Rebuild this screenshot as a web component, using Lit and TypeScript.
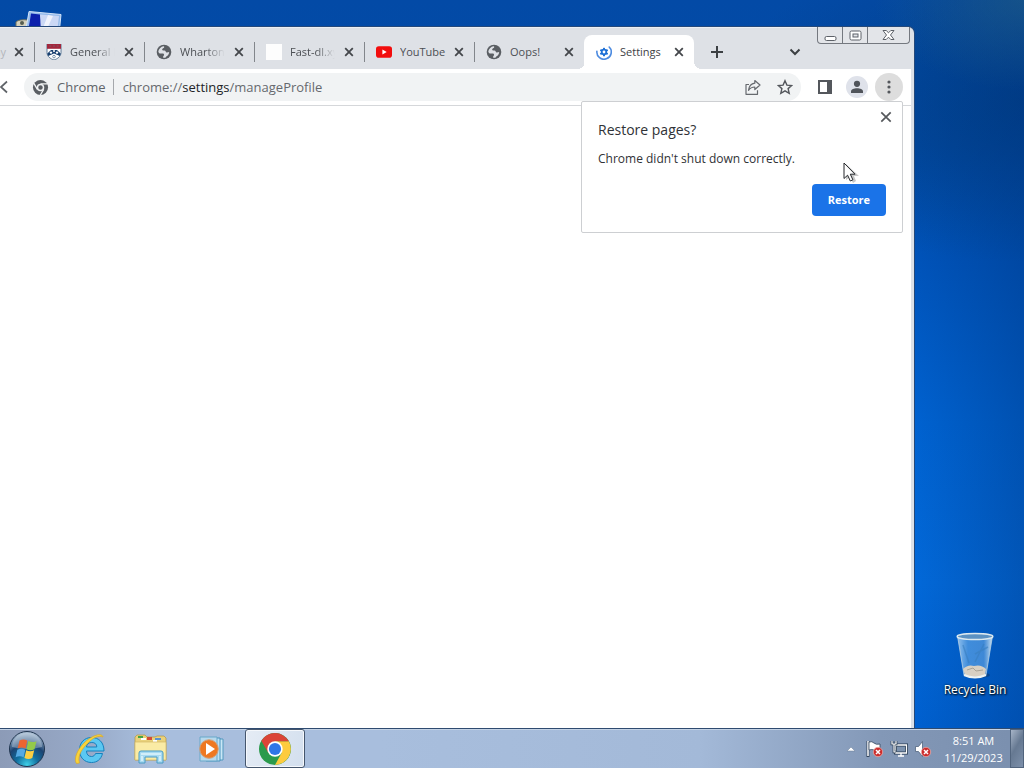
import { LitElement, html, css, svg, nothing } from "lit";
import { customElement, property } from "lit/decorators.js";

const globe = html`<svg class="ico16" viewBox="0 0 16 16" aria-hidden="true">
  <circle cx="8" cy="8" r="7.3" fill="#5a5e63" />
  <path d="M2.300 7.200C3 4.600 5 2.600 7.600 2.200c.9.300.8 1.200.1 1.700-.9.500-1.700.8-1.500 1.800.2.800 1.400.7 2.300.8 1.200.2 1 1.500 2 1.900.8.300 1.700-.3 2.700-.3-.1 1.200-.5 2.300-1.200 3.200-.8.700-2 .9-2.300 2.200-1.200.4-2.400.2-2.600-.1-.2-.9.500-1.500.9-2.200.4-1-.4-1.700-1.500-1.700-1.500 0-2.400.3-3.600-.6z" fill="#dee1e6" />
  <path d="M9.200 3.200l2-.2 1.500 1.700-1.600.6-1.700-.6z" fill="#5a5e63" />
</svg>`;

const penn = html`<svg class="ico16" viewBox="0 0 16 16" aria-hidden="true">
  <path d="M1 0h14v8.500c0 4-3.500 6.300-7 7.500-3.500-1.200-7-3.500-7-7.500z" fill="#fff" stroke="#244a73" stroke-width=".7" />
  <path d="M1 0h14v4.800H1z" fill="#a3263c" />
  <path d="M3.300 2h2M7 2h2M10.700 2h2" stroke="#7f5463" stroke-width="1" />
  <path d="M1.300 9.500L5 6h6l3.700 3.500-.9 2.600L8 9.500l-5.800 2.600z" fill="#173f70" />
  <circle cx="5" cy="8.600" r="1.200" fill="#fff" /><circle cx="11" cy="8.600" r="1.200" fill="#fff" /><path d="M8 5v3" stroke="#fff" stroke-width="1.500" /><circle cx="8" cy="12.600" r="1.300" fill="#fff" stroke="#31567e" stroke-width=".6" />
</svg>`;

const blank = html`<svg class="ico16" viewBox="0 0 16 16" aria-hidden="true"><path d="M0 0h16v16H0z" fill="#fdfdfd" /></svg>`;

const youtube = html`<svg class="ico16" viewBox="0 0 16 16" aria-hidden="true">
  <rect x="0" y="2.300" width="16" height="11.400" rx="2.800" fill="#f20d0d" /><path d="M6.400 5.500v5L10.700 8z" fill="#fff" />
</svg>`;

const teeth = [0, 60, 120].map((a) => svg`<rect x="7" y="3.700" width="2" height="8.600" rx=".6" transform=${`rotate(${a} 8 8)`} />`);
const gear = html`<svg class="ico16" viewBox="0 0 16 16" aria-hidden="true">
  <g fill="#1c6fd6">${teeth}</g>
  <circle cx="8" cy="8" r="2.300" fill="none" stroke="#1c6fd6" stroke-width="1.700" /><circle cx="8" cy="8" r="1.400" fill="#fff" />
  <path d="M13.200 3A7.200 7.200 0 1 1 .9 7.200" fill="none" stroke="#4d8be0" stroke-width="1.600" stroke-linecap="round" />
</svg>`;

const cross = html`<svg class="ico16" viewBox="0 0 16 16" aria-hidden="true"><path d="M4.200 4.200l7.600 7.600M11.800 4.200l-7.600 7.600" stroke="#44474b" stroke-width="1.800" /></svg>`;

@customElement("browser-tab")
class BrowserTab extends LitElement {
  static styles = css`
    :host { display: block; flex: 0 0 110px; min-width: 0; height: 34px; }
    .tab { box-sizing: border-box; position: relative; display: flex; align-items: center; height: 100%; padding: 0 7px 0 11px; border-left: 1px solid transparent; }
    .tab::before { content: ""; position: absolute; left: -1px; top: 7px; width: 1px; height: 20px; background: #82868b; }
    .name { flex: 1; min-width: 0; margin-left: 8px; overflow: hidden; white-space: nowrap; font: 11px/20px "Open Sans", "Noto Sans", sans-serif; color: #4c4f54; }
    .fade { -webkit-mask-image: linear-gradient(90deg, #000 50%, transparent 88%); mask-image: linear-gradient(90deg, #000 50%, transparent 88%); }
    .close { display: flex; padding: 0; border: 0; background: none; }
    .ico16 { display: block; width: 16px; height: 16px; flex: none; }
    .active { background: #fff; border-radius: 8px 8px 0 0; }
    .active::before { left: -8px; top: auto; bottom: 0; width: 8px; height: 8px; background: radial-gradient(circle at 0 0, transparent 8px, #fff 8px); }
    .active::after { content: ""; position: absolute; right: -8px; bottom: 0; width: 8px; height: 8px; background: radial-gradient(circle at 100% 0, transparent 8px, #fff 8px); }
    .active .name { color: #3e4145; }
    .first { padding-left: 0; border: 0; }
    .first::before { display: none; }
    .first .name { display: flex; justify-content: flex-end; margin: 0; padding-right: 5px; color: #b3b6bb; -webkit-mask-image: none; mask-image: none; }
    :host([cut]) { flex-basis: 34px; }
  `;
  @property() label = "";
  @property({ attribute: false }) icon: unknown = nothing;
  @property({ type: Boolean }) active = false;
  @property({ type: Boolean }) long = false;
  @property({ type: Boolean, reflect: true }) cut = false;
  render() {
    return html`<div class="tab ${this.active ? "active" : ""} ${this.cut ? "first" : ""}">
      ${this.icon}<span class="name ${this.long ? "fade" : ""}">${this.label}</span>
      <button class="close" aria-label="Close tab">${cross}</button>
    </div>`;
  }
}

@customElement("restore-bubble")
class RestoreBubble extends LitElement {
  static styles = css`
    :host { display: block; }
    .bubble { box-sizing: border-box; display: grid; grid-template-columns: 1fr auto; padding: 7px 8px 16px 16px; background: #fff; border: 1px solid #cdcfd2; border-radius: 2px; font-family: "Open Sans", "Noto Sans", sans-serif; color: #303236; }
    h2 { margin: 0; padding-top: 10px; font-size: 14px; line-height: 22px; font-weight: 400; }
    .x { align-self: start; padding: 0; border: 0; background: none; }
    .x svg { display: block; width: 16px; height: 16px; }
    p { grid-column: 1 / -1; margin: 8px 0 15px; font-size: 12px; line-height: 20px; }
    .restore { grid-column: 1 / -1; justify-self: end; margin-right: 8px; height: 32px; padding: 0 16px; border: 0; border-radius: 4px; background: #1a73e8; color: #fff; font: 700 11px/32px "Open Sans", "Noto Sans", sans-serif; }
  `;
  render() {
    return html`<section class="bubble" role="dialog" aria-label="Restore pages?">
      <h2>Restore pages?</h2>
      <button class="x" aria-label="Close"><svg viewBox="0 0 16 16"><path d="M3.300 3.300l9.400 9.400M12.700 3.300l-9.400 9.400" stroke="#55585c" stroke-width="1.700" /></svg></button>
      <p>Chrome didn't shut down correctly.</p>
      <button class="restore">Restore</button>
    </section>`;
  }
}

@customElement("browser-window")
class BrowserWindow extends LitElement {
  static styles = css`
    :host { display: block; }
    .window { box-sizing: border-box; height: 100%; display: flex; flex-direction: column; background: #fff; border-right: 3px solid #dce1e8; border-top: 1px solid #eceff3; border-radius: 0 6px 0 0; box-shadow: 0 0 0 1px #25497a; }
    .strip { display: flex; height: 41px; padding-top: 7px; box-sizing: border-box; background: #dee1e6; border-radius: 0 3px 0 0; }
    .tools { flex: 1; display: flex; align-items: center; }
    .tools button, .bar button { display: flex; padding: 0; border: 0; background: none; }
    .plus { margin-left: 14px; }
    .chev { margin-left: auto; margin-right: 108px; }
    .caption { position: absolute; top: 0; right: 4px; display: flex; height: 16px; border: 1px solid #74787f; border-top: 0; border-radius: 0 0 4px 4px; background: #e3e5e9; }
    .caption button { width: 25px; height: 16px; padding: 0; border: 0; border-right: 1px solid #74787f; background: none; display: grid; place-items: center; }
    .caption button:last-child { width: 41px; border: 0; }
    .bar { display: flex; align-items: center; height: 36px; padding-right: 8px; border-bottom: 1px solid #d5d7da; font: 13px/20px "Open Sans", "Noto Sans", sans-serif; color: #606469; }
    .stop { width: 8px; margin-right: 16px; }
    .omni { flex: 1; box-sizing: border-box; display: flex; align-items: center; height: 28px; padding: 0 8px; border-radius: 14px; background: #f1f3f4; }
    .chip { margin: 0 7px 0 8px; }
    .div { width: 1px; height: 16px; margin-right: 9px; background: #a5a8ac; }
    .url { flex: 1; color: #66696e; text-decoration: none; }
    .url b { font-weight: 400; color: #222428; }
    .bar .share { margin-right: 16px; }
    .bar .panel { margin: 0 13px 0 16px; }
    .bar .person { width: 22px; height: 22px; margin-right: 7px; border-radius: 50%; background: #dfe2ea; align-items: center; justify-content: center; }
    .bar .menu { width: 28px; height: 28px; border-radius: 50%; background: #dddddd; align-items: center; justify-content: center; }
    .page { flex: 1; }
    .bubble { position: absolute; top: 74px; right: 11px; width: 322px; }
    svg { display: block; flex: none; }
  `;
  render() {
    return html`<main class="window">
      <div class="strip">
        <browser-tab cut label="ay"></browser-tab>
        <browser-tab long label="General Info" .icon=${penn}></browser-tab>
        <browser-tab long label="Wharton" .icon=${globe}></browser-tab>
        <browser-tab long label="Fast-dl.xyz" .icon=${blank}></browser-tab>
        <browser-tab label="YouTube" .icon=${youtube}></browser-tab>
        <browser-tab label="Oops!" .icon=${globe}></browser-tab>
        <browser-tab active label="Settings" .icon=${gear}></browser-tab>
        <div class="tools">
          <button class="plus" aria-label="New tab"><svg width="18" height="18" viewBox="0 0 18 18"><path d="M9 3v12M3 9h12" stroke="#3c4043" stroke-width="2" /></svg></button>
          <button class="chev" aria-label="Search tabs"><svg width="16" height="16" viewBox="0 0 16 16"><path d="M3.500 5.500L8 10l4.500-4.500" fill="none" stroke="#3c4043" stroke-width="2" /></svg></button>
        </div>
      </div>
      <div class="caption">
        <button aria-label="Minimize"><svg width="13" height="13" viewBox="0 0 13 13"><rect x="1" y="7.500" width="11" height="4" rx="1.500" fill="#fff" stroke="#5d6168" /></svg></button>
        <button aria-label="Maximize"><svg width="13" height="13" viewBox="0 0 13 13"><rect x="1" y="2" width="11" height="9" rx="1.500" fill="#fff" stroke="#5d6168" /><rect x="4" y="5" width="5" height="3" fill="#e3e5e9" stroke="#5d6168" /></svg></button>
        <button aria-label="Close window"><svg width="13" height="12" viewBox="0 0 13 12"><path d="M1 1.500h3.200l2.300 2.300 2.300-2.300H12L8.500 6l3.500 4.500H8.800L6.500 8.200l-2.300 2.300H1L4.500 6z" fill="#fff" stroke="#5d6168" stroke-linejoin="round" /></svg></button>
      </div>
      <div class="bar">
        <button class="stop" aria-label="Stop"><svg width="8" height="14" viewBox="0 0 8 14"><path d="M7 1.500L1 7l6 5.500" fill="none" stroke="#5f6368" stroke-width="1.700" /></svg></button>
        <div class="omni">
          <svg width="17" height="17" viewBox="0 0 18 18"><circle cx="9" cy="9" r="8" fill="#5a5e63" /><circle cx="9" cy="9" r="3.200" fill="#5a5e63" stroke="#f1f3f4" stroke-width="1.600" /><path d="M9 5.200h7.300M5.700 11L2 4.700M12.300 11l-3.600 6.200" stroke="#f1f3f4" stroke-width="1.400" /></svg>
          <span class="chip">Chrome</span><span class="div"></span>
          <a class="url" href="#">chrome://<b>settings</b>/manageProfile</a>
          <button class="share" aria-label="Share"><svg width="16" height="16" viewBox="0 0 16 16"><path d="M4 5.500H1v9.800h11.500v-4M9.800 1.500L15 6l-5.200 4.500V8C7 8 5 9 3.500 11.300 4 7.500 6 4.800 9.800 4.200z" fill="none" stroke="#66696e" stroke-width="1.200" stroke-linejoin="round" /></svg></button>
          <button aria-label="Bookmark this tab"><svg width="16" height="16" viewBox="0 0 16 16"><path d="M8 1.700l1.900 4.400 4.800.4-3.600 3.100 1.100 4.700L8 11.800l-4.200 2.500 1.100-4.700L1.300 6.500l4.800-.4z" fill="none" stroke="#54575c" stroke-width="1.400" /></svg></button>
        </div>
        <button class="panel" aria-label="Side panel"><svg width="16" height="16" viewBox="0 0 16 16"><path d="M2 2h12v12H2z" fill="#fff" stroke="#54575c" stroke-width="2" /><path d="M10 2h4v12h-4z" fill="#54575c" /></svg></button>
        <button class="person" aria-label="Profile"><svg width="16" height="16" viewBox="0 0 16 16"><circle cx="8" cy="4.800" r="3.100" fill="#50545a" /><path d="M2 14v-1.500C2 10.300 5 9.200 8 9.200s6 1.100 6 3.300V14z" fill="#50545a" /></svg></button>
        <button class="menu" aria-label="Menu"><svg width="16" height="16" viewBox="0 0 16 16" fill="#54575c"><circle cx="8" cy="3" r="1.600" /><circle cx="8" cy="8" r="1.600" /><circle cx="8" cy="13" r="1.600" /></svg></button>
      </div>
      <div class="page"></div>
      <restore-bubble class="bubble"></restore-bubble>
    </main>`;
  }
}

@customElement("task-bar")
class TaskBar extends LitElement {
  static styles = css`
    :host { display: block; }
    .bar { box-sizing: border-box; display: flex; align-items: center; height: 40px; border-top: 1px solid #2f4b70; box-shadow: inset 0 1px 0 #c4d3e6; background: linear-gradient(90deg, #8c9bb7 0, #98aac8 90px, #a8bedd 150px, #a8bedd 380px, #a3b9d8 700px, #8398b7 880px, #7a8fae 100%); font-family: "Open Sans", "Noto Sans", sans-serif; }
    button { display: flex; align-items: center; justify-content: center; height: 39px; padding: 0; border: 0; background: none; }
    .start { width: 54px; margin-right: 5px; }
    .app { width: 61px; }
    .current { box-sizing: border-box; width: 60px; margin-left: 3px; border: 1px solid #45566d; border-radius: 3px; background: linear-gradient(110deg, #e5ecf5, #d3dfee); box-shadow: inset 0 0 0 1px #f5f8fc; }
    .tray { margin-left: auto; display: flex; align-items: center; }
    .item { width: 24px; }
    .clock { width: 73px; margin-left: 2px; text-align: center; font-size: 11px; line-height: 17px; color: #fff; }
    .peek { box-sizing: border-box; width: 14px; border: 1px solid #51647d; background: linear-gradient(120deg, #a7b5c8, #667992 45%, #7d90aa); }
    svg { display: block; flex: none; }
  `;
  render() {
    const bad = svg`<circle cx="12" cy="12" r="4.700" fill="#cc2d2d" stroke="#efb1ad" stroke-width=".7" /><path d="M10 10l4 4M14 10l-4 4" stroke="#fff" stroke-width="1.500" />`;
    return html`<nav class="bar" aria-label="Taskbar">
      <button class="start" aria-label="Start"><svg width="38" height="38" viewBox="0 0 38 38">
        <defs><radialGradient id="orb" cx=".5" cy=".95" r=".9"><stop offset="0" stop-color="#3fd0e8" /><stop offset=".35" stop-color="#116f9f" /><stop offset=".65" stop-color="#1c4472" /><stop offset="1" stop-color="#a8bdd2" /></radialGradient></defs>
        <circle cx="19" cy="19" r="17.500" fill="url(#orb)" stroke="#20354f" />
        <path d="M4 17a15 14 0 0 1 30 0q-15 4-30 0z" fill="#cfdbe8" opacity=".4" />
        <path d="M11.500 10.500q3.900-2 7.800 0l-1.700 8q-3.900-2-8 0z" fill="#ec6531" />
        <path d="M20.200 11q4.200 2 8.300.2l-2 8q-3.900 2-8 0z" fill="#93c94a" />
        <path d="M9.300 19.700q3.900-2 8 0l-1.700 7.500q-3.900-2-8 0z" fill="#54a9e3" />
        <path d="M18.200 20.300q3.900 2 8 0l-1.900 7.800q-3.800 2-7.900 0z" fill="#fbcf43" />
      </svg></button>
      <button class="app" aria-label="Internet Explorer"><svg width="34" height="34" viewBox="0 0 34 34">
        <path d="M29.500 21.500C28 27.500 24 30.500 18.500 30.500 11 30.500 6.500 25 6.500 18S11 5.500 18.500 5.500s12.500 5 12.500 13.500H13.500c0 3.500 2 5.500 5 5.500 2 0 3.200-1 4-3zM13.500 15h10.300c0-3-2-4.500-5-4.500s-5.300 1.500-5.300 4.500z" fill="#5bc8f2" stroke="#1681bd" />
        <path d="M3.500 31.500C-1 25 9 9 21 4c5-2 8.500-1.500 9 1-5-2-10 1-15 6S4 23 6.500 31z" fill="#f8d33c" stroke="#dca91f" stroke-width=".7" />
      </svg></button>
      <button class="app" aria-label="Windows Explorer"><svg width="34" height="34" viewBox="0 0 34 34">
        <path d="M1 5l2-2h8l2 2h8l2-1h7l2 2v22H1z" fill="#ead27b" stroke="#b19645" stroke-width=".7" />
        <path d="M4 4h5v2H4z" fill="#43a447" /><path d="M13 5h5v3h-5z" fill="#d34a35" /><path d="M21 6h6v2h-6z" fill="#5b92cd" /><path d="M7 7h5M19 9h4" stroke="#fff" stroke-width="2" />
        <path d="M1 10h31v18H1z" fill="#faeba5" stroke="#d3b864" stroke-width=".7" />
        <path d="M5 31V21q0-2 2-2h20q2 0 2 2v10h-6v-6H11v6z" fill="#a7daf0" stroke="#489bc5" /><path d="M7 22h20M8 24v5M26 24v5" stroke="#e0f5fc" stroke-width="1.500" />
      </svg></button>
      <button class="app" aria-label="Media Player"><svg width="34" height="34" viewBox="0 0 34 34">
        <path d="M14 7h14v21H14z" fill="#cae7f6" stroke="#5299bf" /><path d="M11 6h14v23H11z" fill="#bee1f4" stroke="#4b94bd" /><path d="M5 5h17v24H5z" fill="#b7d9ed" stroke="#68a8c9" />
        <circle cx="14" cy="17" r="9.300" fill="#ee7821" stroke="#d0a17c" /><path d="M11 11v12l9-6z" fill="#fff" />
      </svg></button>
      <button class="current" aria-label="Google Chrome"><svg width="32" height="32" viewBox="0 0 32 32">
        <circle cx="16" cy="16" r="16" fill="#2b9a4c" />
        <path d="M16 8.300H29.900A16 16 0 0 1 16 32L22.700 19.800z" fill="#fdcb3e" />
        <path d="M16 8.300H29.900A16 16 0 0 0 2.300 7.700L9.300 19.800z" fill="#db4437" />
        <circle cx="16" cy="16" r="7.700" fill="#fff" /><circle cx="16" cy="16" r="6.100" fill="#2f76e6" />
      </svg></button>
      <div class="tray">
        <button class="item" aria-label="Show hidden icons"><svg width="10" height="6" viewBox="0 0 10 6"><path d="M5 1l4 4H1z" fill="#fff" stroke="#687c97" stroke-width=".5" /></svg></button>
        <button class="item" aria-label="Action Center"><svg width="18" height="18" viewBox="0 0 18 18"><path d="M2 1v16" stroke="#34465d" stroke-width="3" /><path d="M2 1v15" stroke="#fff" stroke-width="1.500" /><path d="M3 2q3-1 5 1t6 1v7q-4 0-6-1t-5 0z" fill="#fff" stroke="#34465d" stroke-width=".8" />${bad}</svg></button>
        <button class="item" aria-label="Network"><svg width="18" height="18" viewBox="0 0 18 18"><path d="M5.500 5h11v8h-11z" fill="#7c92ae" stroke="#263b52" stroke-width="3" /><path d="M5.500 5h11v8h-11zM11 13v3M8 16h6" fill="none" stroke="#fff" stroke-width="1.300" /><path d="M2 1v3h4V1M4 4v8h2" fill="none" stroke="#263b52" stroke-width="2.700" /><path d="M2 1v3h4V1M4 4v8h2" fill="none" stroke="#fff" stroke-width="1.200" /></svg></button>
        <button class="item" aria-label="Volume muted"><svg width="18" height="18" viewBox="0 0 18 18"><path d="M1.500 6.500h3l4-5v15l-4-5h-3z" fill="#fff" stroke="#52657f" stroke-width=".8" />${bad}</svg></button>
        <time class="clock" datetime="2023-11-29T08:51">8:51 AM<br />11/29/2023</time>
        <button class="peek" aria-label="Show desktop"></button>
      </div>
    </nav>`;
  }
}

@customElement("app-root")
class AppRoot extends LitElement {
  static styles = css`
    :host { display: flex; flex-direction: column; height: 100vh; overflow: hidden; }
    .desk { flex: 1; min-height: 0; position: relative; overflow: hidden; background:
      radial-gradient(ellipse 150px 90px at 100% 0, rgba(50, 110, 130, .4), transparent),
      linear-gradient(90deg, transparent 88%, rgba(0, 50, 120, .38) 100%),
      radial-gradient(ellipse 300px 160px at 100% 14%, rgba(0, 60, 130, .7) 0, rgba(0, 61, 136, 0)),
      linear-gradient(180deg, #034aa6 0, #014ca8 20%, #0055bd 36%, #0064d4 58%, #026bdd 80%, #0062d3 100%); }
    .computer { position: absolute; left: 14px; top: 8px; }
    .window { position: absolute; left: 0; top: 27px; right: 110px; bottom: 0; }
    .bin { position: absolute; right: 12px; bottom: 29px; width: 74px; display: flex; flex-direction: column; align-items: center; gap: 1px; color: #fff; text-decoration: none; white-space: nowrap; font: 12px/18px "Open Sans", "Noto Sans", sans-serif; text-shadow: 1px 1px 2px #000, 0 0 2px #022; }
    .cursor { position: absolute; left: 843px; top: 162px; }
    svg { display: block; }
  `;
  render() {
    return html`<div class="desk">
        <svg class="computer" width="48" height="30" viewBox="0 0 48 30" aria-hidden="true">
          <path d="M2 14q3-3 12-2v12H2z" fill="#d5d1bd" stroke="#6c705e" /><circle cx="8" cy="15" r="2" fill="#555d50" />
          <path d="M15 3.500l32 3-2 20H11z" fill="#95bbeb" stroke="#d2e4fa" /><path d="M17 5.500l9 1q2 6 1 18H14z" fill="#0b20ac" /><path d="M26 6.500l19 1.500-2 17H27z" fill="#cbd8f5" /><path d="M34 7l5 1-8 17h-4z" fill="#f0f3fc" />
        </svg>
        <browser-window class="window"></browser-window>
        <a class="bin" href="#"><svg width="40" height="48" viewBox="0 0 40 48" aria-hidden="true">
          <defs><linearGradient id="glass"><stop offset="0" stop-color="#b5d9f6" stop-opacity=".8" /><stop offset=".3" stop-color="#5ba2e5" stop-opacity=".7" /><stop offset=".75" stop-color="#599de0" stop-opacity=".7" /><stop offset="1" stop-color="#d1e4f1" /></linearGradient></defs>
          <ellipse cx="23" cy="43" rx="12" ry="3" fill="#12355e" opacity=".5" />
          <path d="M2.500 4h35L31 43q-11 5-22 0z" fill="url(#glass)" stroke="#b8d2e5" stroke-width=".8" />
          <path d="M8 37q5-5 11-3 7-2 12 3l-1 6q-10 4-20 0z" fill="#d8d0c3" /><path d="M12 38l6-2 3 3 7-1" fill="none" stroke="#aaa497" />
          <path d="M8 13l6 18M29 12l-9 18M20 22l13-7" stroke="#397fc0" stroke-width="1.500" fill="none" opacity=".6" />
          <ellipse cx="20" cy="4.500" rx="17.800" ry="3" fill="#5b91c2" stroke="#dce9ef" stroke-width="1.500" /><path d="M9 43q11 5 22 0" fill="none" stroke="#eef3f3" stroke-width="2" />
        </svg><span>Recycle Bin</span></a>
        <svg class="cursor" width="17" height="22" viewBox="0 0 17 22" aria-hidden="true"><path d="M3 2v16l4-3 3 6 3-2-2-5h5z" fill="#000" opacity=".22" /><path d="M1 1v15.500l3.600-3.300 2.700 5.800 2.600-1.200-2.600-5.600H12z" fill="#fff" stroke="#24272b" stroke-linejoin="round" /></svg>
      </div>
      <task-bar></task-bar>`;
  }
}
